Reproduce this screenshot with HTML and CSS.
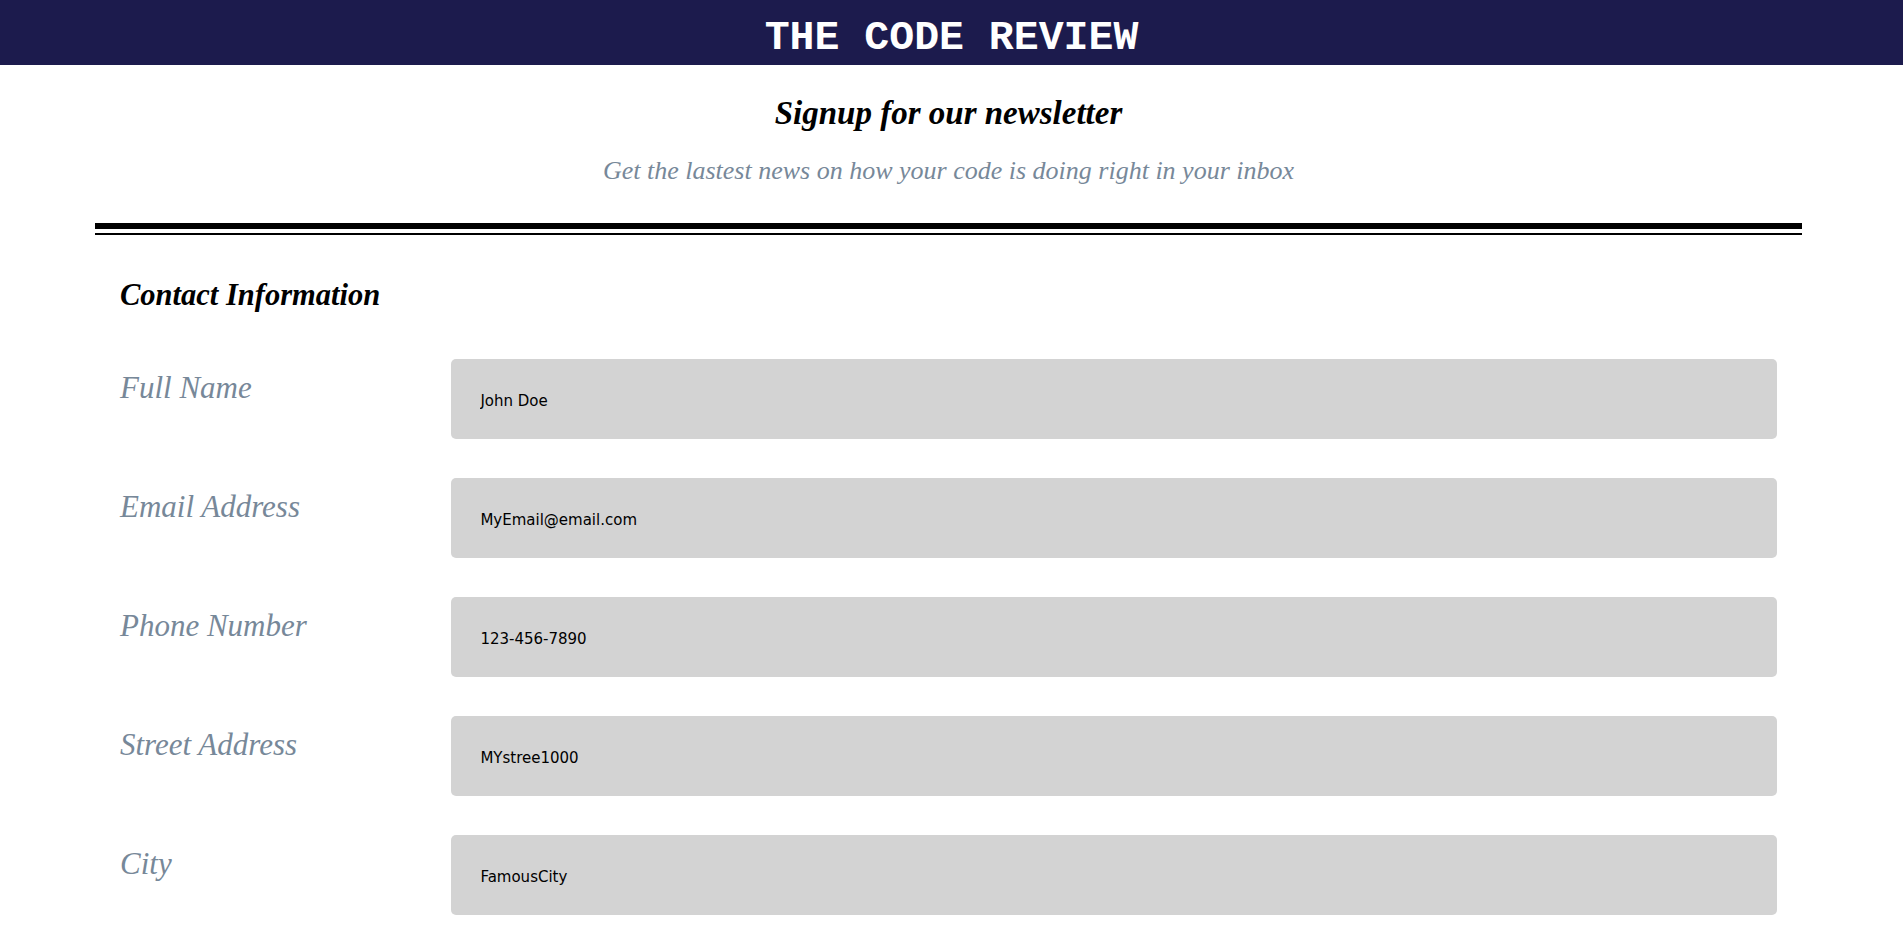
FILE: index.html
```html
<!DOCTYPE html>
<html lang="en">
<head>
<meta charset="utf-8">
<title>The Code Review</title>
<link rel="stylesheet" href="styles.css">
</head>
<body>
<header class="masthead">
  <h1 class="brand">THE CODE REVIEW</h1>
</header>
<main class="page">
  <h2 class="title">Signup for our newsletter</h2>
  <p class="subtitle">Get the lastest news on how your code is doing right in your inbox</p>
  <div class="divider"></div>
  <section class="contact">
    <h3 class="section-title">Contact Information</h3>
    <form class="fields">
      <label class="field-label" for="name">Full Name</label>
      <input class="field-input" id="name" type="text" value="John Doe">
      <label class="field-label" for="email">Email Address</label>
      <input class="field-input" id="email" type="email" value="MyEmail@email.com">
      <label class="field-label" for="phone">Phone Number</label>
      <input class="field-input" id="phone" type="tel" value="123-456-7890">
      <label class="field-label" for="street">Street Address</label>
      <input class="field-input" id="street" type="text" value="MYstree1000">
      <label class="field-label" for="city">City</label>
      <input class="field-input" id="city" type="text" value="FamousCity">
    </form>
  </section>
</main>
</body>
</html>
```

FILE: styles.css
```css
html, body {
  margin: 0;
  padding: 0;
  background: #ffffff;
}

body {
  font-family: "Liberation Serif", serif;
  color: #000;
}

.masthead {
  height: 65px;
  background: #1c1b4d;
  display: flex;
  align-items: center;
  justify-content: center;
}

.brand {
  margin: 0;
  font-family: "Liberation Mono", "Courier New", monospace;
  font-weight: bold;
  font-size: 41.5px;
  line-height: 1;
  color: #ffffff;
  padding-top: 10px;
}

.page {
  margin: 0 101px 0 95px;
}

.title {
  margin: 29px 0 0;
  text-align: center;
  font-style: italic;
  font-weight: bold;
  font-size: 33px;
  line-height: 38px;
}

.subtitle {
  margin: 22px 0 0;
  text-align: center;
  font-style: italic;
  font-size: 26px;
  line-height: 34px;
  color: #778899;
}

.divider {
  margin-top: 35px;
  height: 4px;
  border-top: 6px solid #000;
  border-bottom: 2px solid #000;
}

.contact {
  padding: 0 25px;
}

.section-title {
  margin: 42px 0 0;
  font-style: italic;
  font-weight: bold;
  font-size: 30.5px;
  line-height: 36px;
}

.fields {
  margin-top: 46px;
  display: grid;
  grid-template-columns: 1fr 4fr;
  row-gap: 39px;
}

.field-label {
  align-self: start;
  margin-top: 11px;
  font-style: italic;
  font-size: 31px;
  line-height: 36px;
  color: #778899;
}

.field-input {
  height: 80px;
  box-sizing: border-box;
  padding: 3px 29px 0;
  border: none;
  border-radius: 5px;
  background: #d3d3d3;
  font-family: "DejaVu Sans", Verdana, sans-serif;
  font-size: 15px;
  color: #000;
  outline: none;
}
```
